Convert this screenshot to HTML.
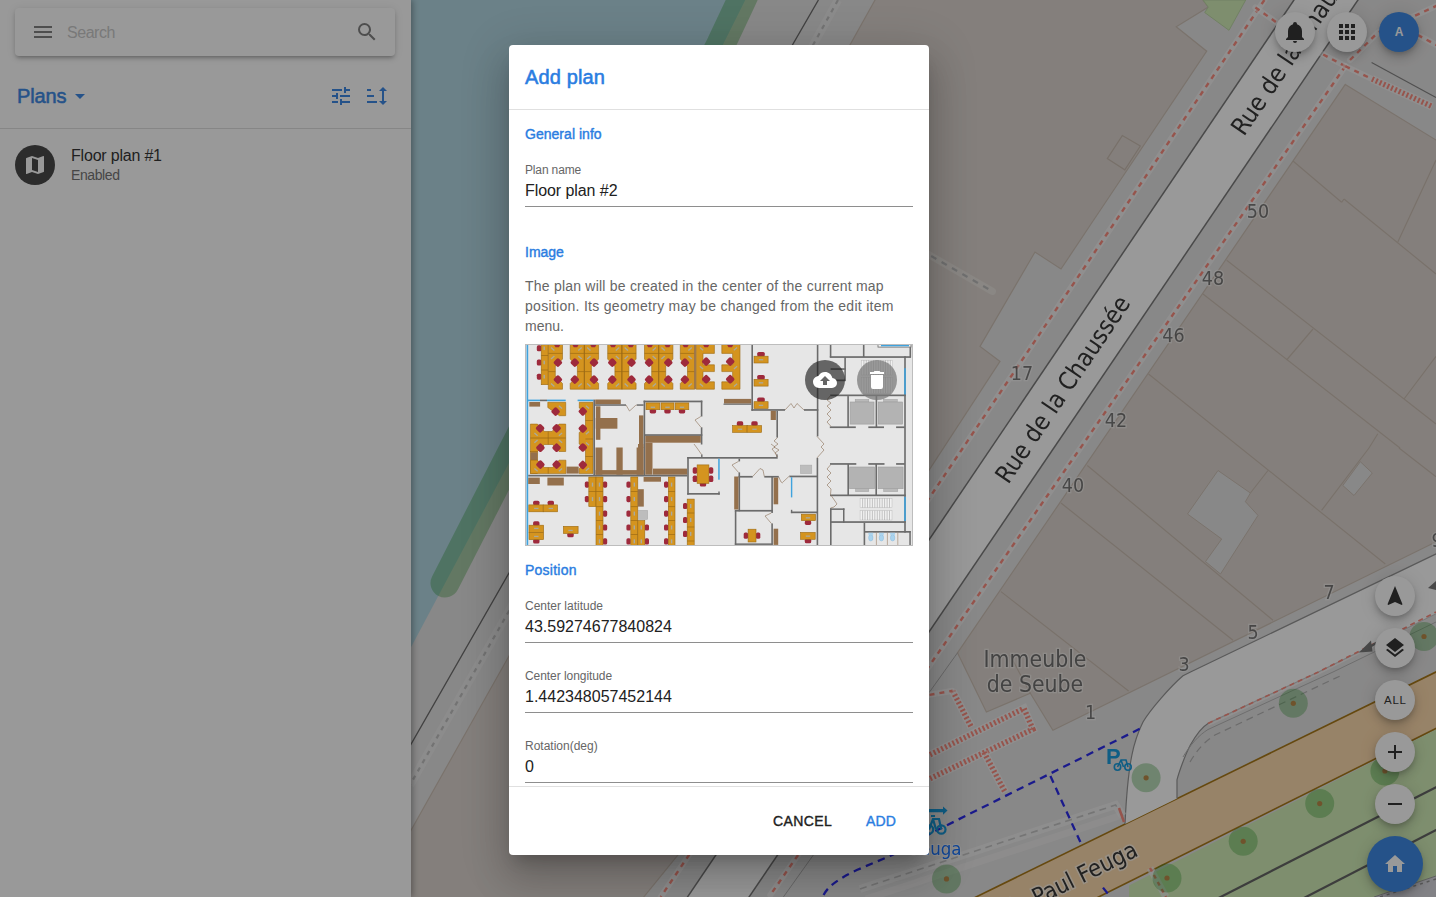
<!DOCTYPE html>
<html lang="en">
<head>
<meta charset="utf-8">
<title>Add plan</title>
<style>
html,body{margin:0;padding:0;}
body{width:1436px;height:897px;overflow:hidden;position:relative;font-family:"Liberation Sans",sans-serif;background:#f2efe9;color:#212121;}
.t{position:absolute;white-space:nowrap;line-height:1;}
#mapwrap{position:absolute;left:0;top:0;width:1436px;height:897px;overflow:hidden;}
#map{position:absolute;left:-12px;top:-12px;width:1460px;height:921px;filter:blur(.68px);}
#side{position:absolute;left:0;top:0;width:411px;height:897px;background:#fff;box-shadow:2px 0 6px rgba(0,0,0,.35);}
#search{position:absolute;left:15px;top:8px;width:380px;height:48px;border-radius:4px;background:#fff;box-shadow:0 3px 3px -2px rgba(0,0,0,.2),0 3px 4px 0 rgba(0,0,0,.14),0 1px 8px 0 rgba(0,0,0,.12);}
.fab{position:absolute;width:40px;height:40px;border-radius:50%;background:#fff;box-shadow:0 3px 5px -1px rgba(0,0,0,.2),0 6px 10px 0 rgba(0,0,0,.14),0 1px 18px 0 rgba(0,0,0,.12);}
.fab svg{position:absolute;left:8px;top:8px;width:24px;height:24px;}
#overlay{position:absolute;left:0;top:0;width:1436px;height:897px;background:rgba(33,33,33,.46);}
#dlg{position:absolute;left:509px;top:45px;width:420px;height:810px;background:#fff;border-radius:4px;box-shadow:0 11px 15px -7px rgba(0,0,0,.2),0 24px 38px 3px rgba(0,0,0,.14),0 9px 46px 8px rgba(0,0,0,.12);overflow:hidden;}
.hr{position:absolute;left:0;width:420px;height:1px;background:#e0e0e0;}
.ul{position:absolute;left:16px;width:388px;height:1px;background:#8e8e8e;}
.sec{color:#2a7de1;font-size:14px;left:16px;-webkit-text-stroke:.4px #2a7de1;}
.med{-webkit-text-stroke:.5px currentColor;}
#dlg .t{margin-top:-.1px;}

#dlg .val{margin-top:1.1px;}
.lab{color:#666;font-size:12px;left:16px;}
.val{color:#212121;font-size:16px;left:16px;}
</style>
</head>
<body>
<!--MAP-->
<div id="mapwrap"><svg id="map" viewBox="-12 -12 1460 921">
<g>
<rect x="-12" y="-12" width="1460" height="921" fill="#e0dfdf"/>
<polygon points="400,-12 751.300,-12 745.3,0 723.3,44 509,463 400,668" fill="#aad3df"/>
<polygon points="886.2,-20 1188,-20 1208.3,7.1 1176.2,26.8 1206.7,51.2 1091,224 1061,269 1035,252 980,346.4 1000,361.4 678,855 625,920 390,920 390,867.600 509,656" fill="#d9d0c9" stroke="#c6b9ad" stroke-width="1.2"/>
<polygon points="1122.3,135.6 1140.3,146 1124.8,169.8 1107.3,158.6" fill="none" stroke="#c2b4a8" stroke-width="1.2"/>
<polygon points="1203,0 1208.3,7.1 1204.7,12.5 1229,30.3 1245.7,0" fill="#cdebb0" stroke="#b5d29c" stroke-width="1"/>
<polygon points="1345.3,84.4 1460,154.700 1460,530 1052.9,730.2 1030.3,693.3 986.4,712 957.5,652.8" fill="#d9d0c9" stroke="#c6b9ad" stroke-width="1.2"/>
<line x1="1293" y1="161" x2="1341.6" y2="202.3" stroke="#c4b6aa" stroke-width="1.2"/>
<line x1="1341.6" y1="202.3" x2="1344" y2="199" stroke="#c4b6aa" stroke-width="1.2"/>
<line x1="1344" y1="199" x2="1436" y2="274" stroke="#c4b6aa" stroke-width="1.2"/>
<line x1="1436" y1="160" x2="1397.8" y2="242" stroke="#c4b6aa" stroke-width="1.2"/>
<line x1="1226.7" y1="260.2" x2="1436" y2="424" stroke="#c4b6aa" stroke-width="1.2"/>
<line x1="1203" y1="294" x2="1400" y2="448" stroke="#c4b6aa" stroke-width="1.2"/>
<line x1="1313" y1="329" x2="1286.6" y2="360" stroke="#c4b6aa" stroke-width="1.2"/>
<line x1="1404" y1="399" x2="1436" y2="356.4" stroke="#c4b6aa" stroke-width="1.2"/>
<line x1="1377.8" y1="433.8" x2="1369" y2="448" stroke="#c4b6aa" stroke-width="1.2"/>
<line x1="1148.5" y1="374" x2="1385.3" y2="564" stroke="#c4b6aa" stroke-width="1.2"/>
<line x1="1268" y1="470.5" x2="1250.4" y2="493" stroke="#c4b6aa" stroke-width="1.2"/>
<line x1="1369" y1="448" x2="1321.6" y2="510.4" stroke="#c4b6aa" stroke-width="1.2"/>
<line x1="1399" y1="448" x2="1436" y2="476.7" stroke="#c4b6aa" stroke-width="1.2"/>
<line x1="1087.3" y1="465.5" x2="1273" y2="620.3" stroke="#c4b6aa" stroke-width="1.2"/>
<line x1="1061" y1="503" x2="1233" y2="640.3" stroke="#c4b6aa" stroke-width="1.2"/>
<line x1="1001" y1="591.6" x2="1128.6" y2="691" stroke="#c4b6aa" stroke-width="1.2"/>
<line x1="1030.3" y1="693.3" x2="1010" y2="655" stroke="#c4b6aa" stroke-width="1.2"/>
<polygon points="1218,470.5 1250.4,493 1245.4,501.7 1258,515.4 1220.5,574 1205.5,561.6 1221.7,539 1187.5,514" fill="#e0dfdf" stroke="#c6b9ad" stroke-width="1"/>
<polygon points="1360.3,461.7 1372.3,473 1354,495.5 1342.8,485.5" fill="#e0dfdf" stroke="#c6b9ad" stroke-width="1"/>
<line x1="957.5" y1="652.8" x2="783.4" y2="897" stroke="#a8a8a8" stroke-width="1"/>
<polyline points="818.4,0 793,44 509,573 410,746" fill="none" stroke="#5e5e5e" stroke-width="1.4"/>
<polyline points="838,0 813.6,44 509,611 410,785" fill="none" stroke="#f0f0f0" stroke-width="8.5" opacity=".5"/>
<polyline points="838,0 813.6,44 509,611 410,785" fill="none" stroke="#b9b9b9" stroke-width="2.2" stroke-dasharray="4.5,5"/>
<path d="M445,583 L721,44 L741.7,0 L760,-40" fill="none" stroke="#008000" stroke-opacity=".3" stroke-width="29" stroke-linecap="round" stroke-linejoin="round"/>
<line x1="900" y1="238" x2="992.4" y2="291.4" stroke="#e8e4df" stroke-width="7" stroke-linecap="round" opacity=".7"/>
<line x1="900" y1="238" x2="992.4" y2="291.4" stroke="#b4b4b4" stroke-width="2.2" stroke-dasharray="6,6"/>
<polygon points="1448,666.100 951.500,909 1074.500,909 1448,722.500" fill="#fcd6a4"/>
<line x1="1448" y1="666.100" x2="951.500" y2="909" stroke="#a06b00" stroke-width="1.6"/>
<line x1="1448" y1="722.500" x2="1074.500" y2="909" stroke="#a06b00" stroke-width="1.6"/>
<polygon points="1129,909 1129,885.500 1448,723.500 1448,872.500 1338,909" fill="#cdebb0"/>
<polygon points="1338,909 1448,872 1448,909" fill="#d4d4dc"/>
<line x1="1374" y1="897" x2="1436" y2="876" stroke="#999" stroke-width="1"/>
<line x1="1380" y1="897" x2="1436" y2="879" stroke="#888" stroke-width="1.5" stroke-dasharray="3,4"/>
<line x1="1197" y1="909" x2="1448" y2="781.200" stroke="#555" stroke-width="2.2"/>
<line x1="1282.600" y1="909" x2="1448" y2="823.800" stroke="#555" stroke-width="2.2"/>
<line x1="1150" y1="868" x2="1166" y2="897" stroke="#eee" stroke-width="7" opacity=".7"/>
<line x1="1150" y1="868" x2="1166" y2="897" stroke="#fa8072" stroke-width="2.5" stroke-dasharray="4,4"/>
<path d="M1448,548.200 L1190.5,672 L1183,675.8 C1170,687 1150,710 1143,722 C1134,740 1128,760 1125,824 L1177,798.500 L1177,779.800 C1179,772 1185,755 1190.5,744.700 C1196,735 1202,727 1208,723.400 L1318.4,672 L1448,608 Z" fill="#fff"/>
<path d="M1448,548.200 L1190.5,672 L1183,675.8 C1170,687 1150,710 1143,722 C1134,740 1128,760 1125,824" fill="none" stroke="#8a8a8a" stroke-width="1.2"/>
<path d="M1177,798.5 L1177,779.8 C1179,772 1185,755 1190.5,744.7 C1196,735 1202,727 1208,723.4 L1318.4,672 L1448,608" fill="none" stroke="#8a8a8a" stroke-width="1.2"/>
<path d="M1183,757 C1190,745 1199,735 1208,729.500 L1333,672 L1436,622" fill="none" stroke="#b0b0b0" stroke-width="1"/>
<path d="M1190,762 C1197,750 1205,741 1215,735 L1340,676" fill="none" stroke="#aaa" stroke-width="1.2" stroke-dasharray="7,5"/>
<path d="M1208,723.4 L1318.4,672 L1436,612" fill="none" stroke="#fff" stroke-width="5" opacity=".5"/>
<path d="M1208,723.4 L1318.4,672 L1436,612" fill="none" stroke="#fa8072" stroke-width="1.7" stroke-dasharray="5,4"/>
<path d="M1378,642 L1366,649" stroke="#6c6c6c" stroke-width="2.5"/><polygon points="1359,652.5 1371,640.5 1372.5,651.5" fill="#6c6c6c"/>
<polygon points="1428,588 1436,581 1436,590" fill="#6c6c6c"/>
<polygon points="1302.100,-12 1366.100,-12 740.900,909 679.400,909" fill="#fff"/>
<line x1="1302.100" y1="-12" x2="679.400" y2="909" stroke="#6c6c6c" stroke-width="1.5"/>
<line x1="1366.100" y1="-12" x2="740.900" y2="909" stroke="#6c6c6c" stroke-width="1.5"/>
<path d="M1264.4,0 L660.7,897" fill="none" stroke="#fff" stroke-width="6" opacity=".45" stroke-linecap="round"/>
<path d="M1264.4,0 L660.7,897" fill="none" stroke="#fa8072" stroke-width="2.4" stroke-dasharray="5,5"/>
<path d="M1255.4,7.5 L1276.7,22.5" fill="none" stroke="#fff" stroke-width="6" opacity=".45" stroke-linecap="round"/>
<path d="M1255.4,7.5 L1276.7,22.5" fill="none" stroke="#fa8072" stroke-width="2.4" stroke-dasharray="5,5"/>
<path d="M1345.3,66.2 L770.3,895" fill="none" stroke="#fff" stroke-width="6" opacity=".45" stroke-linecap="round"/>
<path d="M1345.3,66.2 L770.3,895" fill="none" stroke="#fa8072" stroke-width="2.4" stroke-dasharray="5,5"/>
<path d="M1345.3,66.2 L1321.6,53.7" fill="none" stroke="#fff" stroke-width="6" opacity=".45" stroke-linecap="round"/>
<path d="M1345.3,66.2 L1321.6,53.7" fill="none" stroke="#fa8072" stroke-width="2.4" stroke-dasharray="5,5"/>
<path d="M1350,60 L1378,32.5 L1433,7.5 L1440,4" fill="none" stroke="#fff" stroke-width="6" opacity=".45" stroke-linecap="round"/>
<path d="M1350,60 L1378,32.5 L1433,7.5 L1440,4" fill="none" stroke="#fa8072" stroke-width="2.4" stroke-dasharray="5,5"/>
<path d="M1417.8,35 L1440,47" fill="none" stroke="#fff" stroke-width="6" opacity=".45" stroke-linecap="round"/>
<path d="M1417.8,35 L1440,47" fill="none" stroke="#fa8072" stroke-width="2.4" stroke-dasharray="5,5"/>
<path d="M1345.3,66.2 L1372,79" fill="none" stroke="#fff" stroke-width="6" opacity=".45" stroke-linecap="round"/>
<path d="M1345.3,66.2 L1372,79" fill="none" stroke="#fa8072" stroke-width="2.4" stroke-dasharray="5,5"/>
<path d="M1372,79 L1432,106.5" fill="none" stroke="#fff" stroke-width="8" opacity=".4"/>
<path d="M1372,79 L1432,106.5" fill="none" stroke="#fa8072" stroke-width="5.5" stroke-dasharray="2,2.2"/>
<line x1="1371.6" y1="62.4" x2="1436" y2="97.4" stroke="#777" stroke-width="1.1"/>
<path d="M930,754.7 L1024,708.4 L1032.8,729.2 L930,778.6" fill="none" stroke="#fff" stroke-width="8" opacity=".4"/>
<path d="M930,754.7 L1024,708.4 L1032.8,729.2 L930,778.6" fill="none" stroke="#fa8072" stroke-width="5.5" stroke-dasharray="2,2.2"/>
<path d="M952.6,690.8 L971.4,727.2" fill="none" stroke="#fff" stroke-width="8" opacity=".4"/>
<path d="M952.6,690.8 L971.4,727.2" fill="none" stroke="#fa8072" stroke-width="5.5" stroke-dasharray="2,2.2"/>
<path d="M984,752.2 L1005.2,792.4" fill="none" stroke="#fff" stroke-width="8" opacity=".4"/>
<path d="M984,752.2 L1005.2,792.4" fill="none" stroke="#fa8072" stroke-width="5.5" stroke-dasharray="2,2.2"/>
<path d="M900,700 L952.6,690.8" fill="none" stroke="#fff" stroke-width="6" opacity=".45" stroke-linecap="round"/>
<path d="M900,700 L952.6,690.8" fill="none" stroke="#fa8072" stroke-width="2.4" stroke-dasharray="5,5"/>
<path d="M860,889 L930,866 L1115.6,805 L1123,816" fill="none" stroke="#f4f4f4" stroke-width="8" opacity=".55"/>
<path d="M860,889 L930,866 L1115.6,805 L1123,816" fill="none" stroke="#bcbcbc" stroke-width="1.6" stroke-dasharray="7,5"/>
<path d="M866,899 L930,878 L1119,816" fill="none" stroke="#f4f4f4" stroke-width="7" opacity=".45"/>
<path d="M1119,808 L1124,822" fill="none" stroke="#fa8072" stroke-width="2.5"/>
<path d="M823.6,895 C828,886 840,878 856.800,870 L892.3,855 L930,833.7 L1140.6,728.4" stroke="#1616e8" stroke-width="2.3" stroke-dasharray="7.5,5.5" fill="none"/>
<path d="M1050.4,776 L1081.7,845" stroke="#1616e8" stroke-width="2.3" stroke-dasharray="7.5,5.5" fill="none"/>
<path d="M1103,887.6 L1110.5,897" stroke="#1616e8" stroke-width="2.3" stroke-dasharray="7.5,5.5" fill="none"/>
<circle cx="1146.1" cy="777.8" r="14.5" fill="#008000" fill-opacity=".3"/><circle cx="1146.1" cy="777.8" r="2.6" fill="#b27f36"/>
<circle cx="946.5" cy="878.9" r="14.5" fill="#008000" fill-opacity=".3"/><circle cx="946.5" cy="878.9" r="2.6" fill="#b27f36"/>
<circle cx="1167" cy="878" r="14.5" fill="#008000" fill-opacity=".3"/><circle cx="1167" cy="878" r="2.6" fill="#b27f36"/>
<circle cx="1293.3" cy="703.3" r="14.5" fill="#008000" fill-opacity=".3"/><circle cx="1293.3" cy="703.3" r="2.6" fill="#b27f36"/>
<circle cx="1319.7" cy="803.6" r="14.5" fill="#008000" fill-opacity=".3"/><circle cx="1319.7" cy="803.6" r="2.6" fill="#b27f36"/>
<circle cx="1243.2" cy="841.3" r="14.5" fill="#008000" fill-opacity=".3"/><circle cx="1243.2" cy="841.3" r="2.6" fill="#b27f36"/>
<circle cx="1384.9" cy="771" r="14.5" fill="#008000" fill-opacity=".3"/><circle cx="1384.9" cy="771" r="2.6" fill="#b27f36"/>
<circle cx="1424" cy="636.5" r="14.5" fill="#008000" fill-opacity=".3"/><circle cx="1424" cy="636.5" r="2.6" fill="#b27f36"/>
<text x="1258" y="218.02" font-family='"DejaVu Sans Condensed","DejaVu Sans",sans-serif' font-size="19.5" text-anchor="middle" fill="#555" stroke="#fff" stroke-opacity=".55" stroke-width="2.5" paint-order="stroke" opacity=".85">50</text>
<text x="1213" y="284.72" font-family='"DejaVu Sans Condensed","DejaVu Sans",sans-serif' font-size="19.5" text-anchor="middle" fill="#555" stroke="#fff" stroke-opacity=".55" stroke-width="2.5" paint-order="stroke" opacity=".85">48</text>
<text x="1173.5" y="342.02" font-family='"DejaVu Sans Condensed","DejaVu Sans",sans-serif' font-size="19.5" text-anchor="middle" fill="#555" stroke="#fff" stroke-opacity=".55" stroke-width="2.5" paint-order="stroke" opacity=".85">46</text>
<text x="1116" y="426.62" font-family='"DejaVu Sans Condensed","DejaVu Sans",sans-serif' font-size="19.5" text-anchor="middle" fill="#555" stroke="#fff" stroke-opacity=".55" stroke-width="2.5" paint-order="stroke" opacity=".85">42</text>
<text x="1072.9" y="492.02" font-family='"DejaVu Sans Condensed","DejaVu Sans",sans-serif' font-size="19.5" text-anchor="middle" fill="#555" stroke="#fff" stroke-opacity=".55" stroke-width="2.5" paint-order="stroke" opacity=".85">40</text>
<text x="1022" y="380.42" font-family='"DejaVu Sans Condensed","DejaVu Sans",sans-serif' font-size="19.5" text-anchor="middle" fill="#555" stroke="#fff" stroke-opacity=".55" stroke-width="2.5" paint-order="stroke" opacity=".85">17</text>
<text x="1329" y="599.42" font-family='"DejaVu Sans Condensed","DejaVu Sans",sans-serif' font-size="19.5" text-anchor="middle" fill="#555" stroke="#fff" stroke-opacity=".55" stroke-width="2.5" paint-order="stroke" opacity=".85">7</text>
<text x="1253" y="639.32" font-family='"DejaVu Sans Condensed","DejaVu Sans",sans-serif' font-size="19.5" text-anchor="middle" fill="#555" stroke="#fff" stroke-opacity=".55" stroke-width="2.5" paint-order="stroke" opacity=".85">5</text>
<text x="1184" y="671.02" font-family='"DejaVu Sans Condensed","DejaVu Sans",sans-serif' font-size="19.5" text-anchor="middle" fill="#555" stroke="#fff" stroke-opacity=".55" stroke-width="2.5" paint-order="stroke" opacity=".85">3</text>
<text x="1090.5" y="718.62" font-family='"DejaVu Sans Condensed","DejaVu Sans",sans-serif' font-size="19.5" text-anchor="middle" fill="#555" stroke="#fff" stroke-opacity=".55" stroke-width="2.5" paint-order="stroke" opacity=".85">1</text>
<text x="1437" y="547.42" font-family='"DejaVu Sans Condensed","DejaVu Sans",sans-serif' font-size="19.5" text-anchor="middle" fill="#555" stroke="#fff" stroke-opacity=".55" stroke-width="2.5" paint-order="stroke" opacity=".85">9</text>
<text x="1035" y="666.5" font-family='"DejaVu Sans Condensed","DejaVu Sans",sans-serif' font-size="22.8" text-anchor="middle" fill="#555" stroke="#fff" stroke-opacity=".5" stroke-width="2.5" paint-order="stroke" opacity=".9">Immeuble</text>
<text x="1035" y="691.8" font-family='"DejaVu Sans Condensed","DejaVu Sans",sans-serif' font-size="22.8" text-anchor="middle" fill="#555" stroke="#fff" stroke-opacity=".5" stroke-width="2.5" paint-order="stroke" opacity=".9">de Seube</text>
<text transform="translate(1000.8,480) rotate(-55.9)" x="0" y="8.928" font-family='"DejaVu Sans Condensed","DejaVu Sans",sans-serif' font-size="24.8" text-anchor="start" fill="#222" stroke="#fff" stroke-opacity=".6" stroke-width="3" paint-order="stroke">Rue de la Chaussée</text>
<text transform="translate(1236.57,132) rotate(-55.9)" x="0" y="8.928" font-family='"DejaVu Sans Condensed","DejaVu Sans",sans-serif' font-size="24.8" text-anchor="start" fill="#222" stroke="#fff" stroke-opacity=".6" stroke-width="3" paint-order="stroke">Rue de la Chaussée</text>
<text transform="translate(1058,886) rotate(-26.3)" x="0" y="8.46" font-family='"DejaVu Sans Condensed","DejaVu Sans",sans-serif' font-size="23.5" text-anchor="middle" fill="#222" stroke="#fff" stroke-opacity=".6" stroke-width="3" paint-order="stroke">Allée Paul Feuga</text>
<text x="961.5" y="855" font-family='"DejaVu Sans Condensed","DejaVu Sans",sans-serif' font-size="18.500" text-anchor="end" fill="#0066ff" stroke="#fff" stroke-opacity=".5" stroke-width="2" paint-order="stroke">Feuga</text>
<text x="1106" y="764" font-family='"Liberation Sans",sans-serif' font-weight="bold" font-size="22" fill="#0092da">P</text>
<g stroke="#0092da" stroke-width="1.6" fill="none"><circle cx="1117.5" cy="767" r="3.2"/><circle cx="1128" cy="767" r="3.2"/><path d="M1117.5,767 L1121,760 L1126,760 L1128,767 M1121,760 L1123.5,767"/></g>
<g stroke="#0092da" stroke-width="2.2" fill="none"><circle cx="929" cy="829.500" r="4.2"/><circle cx="941.300" cy="829.500" r="4.2"/><path d="M929,829.500 L933,819 L939,819 L941.300,829.500 M933,819 L936,829.500 M931,816 L935,816"/></g>
<path d="M922,809 L943,809 L943,806.500 L947.500,810.600 L943,814.700 L943,812.200 L922,812.200 Z" fill="#0092da"/>
</g>
</svg></div>
<!--/MAP-->

<!--SIDE-->
<div id="side">
  <div id="search">
    <svg style="position:absolute;left:16px;top:12px" width="24" height="24" viewBox="0 0 24 24"><path fill="#757575" d="M3 6h18v2H3zM3 11h18v2H3zM3 16h18v2H3z"/></svg>
    <div class="t" id="s_search" style="left:52px;top:16.9px;font-size:16px;color:#c4c4c4;letter-spacing:-0.45px;">Search</div>
    <svg style="position:absolute;left:339.5px;top:12px" width="24" height="24" viewBox="0 0 24 24"><path fill="#757575" d="M9.5,3A6.5,6.5 0 0,1 16,9.500C16,11.110 15.410,12.590 14.440,13.730L14.710,14H15.500L20.500,19L19,20.500L14,15.500V14.710L13.730,14.440C12.590,15.410 11.110,16 9.500,16A6.500,6.500 0 0,1 3,9.500A6.500,6.500 0 0,1 9.500,3M9.500,5C7,5 5,7 5,9.500C5,12 7,14 9.500,14C12,14 14,12 14,9.500C14,7 12,5 9.500,5Z"/></svg>
  </div>
  <div class="t" id="s_plans" style="left:17px;top:85.800px;font-size:20px;color:#2a7de1;-webkit-text-stroke:.55px #2a7de1;letter-spacing:-0.12px;">Plans</div>
  <svg style="position:absolute;left:68px;top:84px" width="24" height="24" viewBox="0 0 24 24"><path fill="#2a7de1" d="M7,10L12,15L17,10H7Z"/></svg>
  <svg style="position:absolute;left:329px;top:84px" width="24" height="24" viewBox="0 0 24 24"><path fill="#2a7de1" d="M3 17v2h6v-2H3zM3 5v2h10V5H3zm10 16v-2h8v-2h-8v-2h-2v6h2zM7 9v2H3v2h4v2h2V9H7zm14 4v-2H11v2h10zm-6-4h2V7h4V5h-4V3h-2v6z"/></svg>
  <svg style="position:absolute;left:365px;top:84px" width="24" height="24" viewBox="0 0 24 24"><path fill="#2a7de1" d="M18 21L14 17H17V7H14L18 3L22 7H19V17H22M2 19V17H12V19M2 13V11H9V13M2 7V5H6V7H2Z"/></svg>
  <div style="position:absolute;left:0;top:128px;width:411px;height:1px;background:#dcdcdc"></div>
  <div style="position:absolute;left:15px;top:145px;width:40px;height:40px;border-radius:50%;background:#363636">
    <svg style="position:absolute;left:8px;top:8px" width="24" height="24" viewBox="0 0 24 24"><path fill="#fff" d="M15,19L9,16.890V5L15,7.110M20.500,3C20.440,3 20.390,3 20.340,3L15,5.100L9,3L3.360,4.900C3.150,4.970 3,5.150 3,5.380V20.500A0.500,0.500 0 0,0 3.500,21C3.550,21 3.610,21 3.660,20.970L9,18.900L15,21L20.640,19.100C20.850,19 21,18.850 21,18.620V3.500A0.500,0.500 0 0,0 20.500,3Z"/></svg>
  </div>
  <div class="t" id="s_fp1" style="left:71px;top:148.3px;font-size:16px;color:#212121;letter-spacing:-0.2px;">Floor plan #1</div>
  <div class="t" id="s_en" style="left:71px;top:167.800px;font-size:14px;color:#666;letter-spacing:-0.4px;">Enabled</div>
</div>
<!--/SIDE-->

<!--FABS-->
<div class="fab" style="left:1275px;top:12px"><svg viewBox="0 0 24 24"><path fill="#212121" d="M21,19V20H3V19L5,17V11C5,7.900 7.030,5.170 10,4.290C10,4.190 10,4.100 10,4A2,2 0 0,1 12,2A2,2 0 0,1 14,4C14,4.100 14,4.190 14,4.290C16.970,5.170 19,7.900 19,11V17L21,19M14,21A2,2 0 0,1 12,23A2,2 0 0,1 10,21"/></svg></div>
<div class="fab" style="left:1327px;top:12px"><svg viewBox="0 0 24 24"><path fill="#212121" d="M4 8h4V4H4v4zm6 12h4v-4h-4v4zm-6 0h4v-4H4v4zm0-6h4v-4H4v4zm6 0h4v-4h-4v4zm6-10v4h4V4h-4zm-6 4h4V4h-4v4zm6 6h4v-4h-4v4zm0 6h4v-4h-4v4z"/></svg></div>
<div class="fab" style="left:1379px;top:12px;background:#2a7de1"><div class="t" style="left:0;width:40px;text-align:center;top:14px;font-size:12px;font-weight:bold;color:#fff">A</div></div>
<div class="fab" style="left:1375px;top:576px"><svg viewBox="0 0 24 24"><path fill="#212121" d="M12,2L4.500,20.290L5.210,21L12,18L18.790,21L19.500,20.290L12,2Z"/></svg></div>
<div class="fab" style="left:1375px;top:628px"><svg viewBox="0 0 24 24"><path fill="#212121" d="M12,16L19.360,10.270L21,9L12,2L3,9L4.630,10.270M12,18.540L4.620,12.810L3,14.070L12,21.070L21,14.070L19.370,12.800L12,18.540Z"/></svg></div>
<div class="fab" style="left:1375px;top:680px"><div class="t" style="left:0;width:40px;text-align:center;top:14.500px;font-size:11.500px;color:#212121;letter-spacing:0.7px;text-indent:0.7px">ALL</div></div>
<div class="fab" style="left:1375px;top:732px"><svg viewBox="0 0 24 24"><path fill="#212121" d="M19,13H13V19H11V13H5V11H11V5H13V11H19V13Z"/></svg></div>
<div class="fab" style="left:1375px;top:784px"><svg viewBox="0 0 24 24"><path fill="#212121" d="M19,13H5V11H19V13Z"/></svg></div>
<div class="fab" style="left:1367px;top:836px;width:56px;height:56px;background:#2a7de1"><svg viewBox="0 0 24 24" style="left:16px;top:16px"><path fill="#fff" d="M10,20V14H14V20H19V12H22L12,3L2,12H5V20H10Z"/></svg></div>
<!--/FABS-->

<div id="overlay"></div>

<!--DLG-->
<div id="dlg">
  <div class="t" id="d_title" style="left:16px;top:22px;font-size:20px;color:#2a7de1;-webkit-text-stroke:.55px #2a7de1;letter-spacing:0.13px;">Add plan</div>
  <div class="hr" style="top:64px"></div>
  <div class="t sec" id="d_gi" style="top:82px;letter-spacing:0.03px;">General info</div>
  <div class="t lab" id="d_pn" style="top:119px;letter-spacing:-0.15px;">Plan name</div>
  <div class="t val" id="d_fp2" style="top:137px;letter-spacing:-0.07px;">Floor plan #2</div>
  <div class="ul" style="top:161px"></div>
  <div class="t sec" id="d_im" style="top:200px;letter-spacing:0px;">Image</div>
  <div class="t" id="d_p1" style="left:16px;top:234px;font-size:14px;color:#666;letter-spacing:0.22px;">The plan will be created in the center of the current map</div>
  <div class="t" id="d_p2" style="left:16px;top:254px;font-size:14px;color:#666;letter-spacing:0.29px;">position. Its geometry may be changed from the edit item</div>
  <div class="t" id="d_p3" style="left:16px;top:274px;font-size:14px;color:#666;">menu.</div>
  <!--PLAN-->
  <svg id="plan" viewBox="0 0 388 202" style="position:absolute;left:16px;top:299px;width:388px;height:202px;">
<rect x="0.0" y="0.0" width="388.0" height="202.0" fill="#e6e6e6"/>
<rect x="11.8" y="1.3" width="4.8" height="6.0" rx="1.6" fill="#9e2a3c"/>
<rect x="11.8" y="15.5" width="4.8" height="6.0" rx="1.6" fill="#9e2a3c"/>
<rect x="11.8" y="29.7" width="4.8" height="6.0" rx="1.6" fill="#9e2a3c"/>
<rect x="16.2" y="0.5" width="7.0" height="40.2" fill="#d4941f" stroke="#9c6a14" stroke-width=".6"/>
<rect x="18.5" y="2.5" width="1.4" height="3.6" fill="#a9a9a0" transform="rotate(0 19.2 4.3)"/>
<rect x="18.5" y="16.7" width="1.4" height="3.6" fill="#a9a9a0" transform="rotate(0 19.2 18.5)"/>
<rect x="18.5" y="30.9" width="1.4" height="3.6" fill="#a9a9a0" transform="rotate(0 19.2 32.7)"/>
<line x1="16.2" y1="11.5" x2="23.2" y2="11.5" stroke="#9c6a14" stroke-width=".7"/>
<line x1="16.2" y1="26.0" x2="23.2" y2="26.0" stroke="#9c6a14" stroke-width=".7"/>
<polygon points="23.3,45.2 37.5,45.2 37.5,39.5 30.3,32.1 30.3,22.5 37.5,15.1 37.5,0.5 23.3,0.5" fill="#d4941f" stroke="#9c6a14" stroke-width=".6"/>
<line x1="23.3" y1="9.4" x2="37.5" y2="9.4" stroke="#9c6a14" stroke-width=".7"/>
<line x1="23.3" y1="27.6" x2="30.3" y2="27.6" stroke="#9c6a14" stroke-width=".7"/>
<rect x="29.4" y="15.1" width="7.0" height="7.0" rx="1.7" fill="#9e2a3c" transform="rotate(45 32.9 18.6)"/>
<rect x="29.4" y="32.1" width="7.0" height="7.0" rx="1.7" fill="#9e2a3c" transform="rotate(45 32.9 35.6)"/>
<polygon points="28.9,0.5 35.5,0.5 33.9,3.2 30.5,3.2" fill="#9e2a3c"/>
<rect x="25.5" y="4.3" width="4.4" height="1.4" fill="#a9a9a0" transform="rotate(40 27.7 5.0)"/>
<rect x="25.5" y="12.8" width="4.4" height="1.4" fill="#a9a9a0" transform="rotate(-40 27.7 13.5)"/>
<rect x="25.5" y="40.3" width="4.4" height="1.4" fill="#a9a9a0" transform="rotate(40 27.7 41.0)"/>
<polygon points="59.4,0.5 45.2,0.5 45.2,15.1 52.4,22.5 52.4,32.1 45.2,39.5 45.2,45.2 59.4,45.2" fill="#d4941f" stroke="#9c6a14" stroke-width=".6"/>
<polygon points="59.4,45.2 73.6,45.2 73.6,39.5 66.4,32.1 66.4,22.5 73.6,15.1 73.6,0.5 59.4,0.5" fill="#d4941f" stroke="#9c6a14" stroke-width=".6"/>
<line x1="45.2" y1="9.4" x2="73.6" y2="9.4" stroke="#9c6a14" stroke-width=".7"/>
<line x1="52.4" y1="27.6" x2="66.4" y2="27.6" stroke="#9c6a14" stroke-width=".7"/>
<line x1="59.4" y1=".5" x2="59.4" y2="45.2" stroke="#9c6a14" stroke-width=".8"/>
<rect x="46.3" y="15.1" width="7.0" height="7.0" rx="1.7" fill="#9e2a3c" transform="rotate(45 49.8 18.6)"/>
<rect x="46.3" y="32.1" width="7.0" height="7.0" rx="1.7" fill="#9e2a3c" transform="rotate(45 49.8 35.6)"/>
<polygon points="47.2,0.5 53.8,0.5 52.2,3.2 48.8,3.2" fill="#9e2a3c"/>
<rect x="52.8" y="4.3" width="4.4" height="1.4" fill="#a9a9a0" transform="rotate(-40 55.0 5.0)"/>
<rect x="52.8" y="12.8" width="4.4" height="1.4" fill="#a9a9a0" transform="rotate(40 55.0 13.5)"/>
<rect x="52.8" y="40.3" width="4.4" height="1.4" fill="#a9a9a0" transform="rotate(-40 55.0 41.0)"/>
<rect x="65.5" y="15.1" width="7.0" height="7.0" rx="1.7" fill="#9e2a3c" transform="rotate(45 69.0 18.6)"/>
<rect x="65.5" y="32.1" width="7.0" height="7.0" rx="1.7" fill="#9e2a3c" transform="rotate(45 69.0 35.6)"/>
<polygon points="65.0,0.5 71.6,0.5 70.0,3.2 66.6,3.2" fill="#9e2a3c"/>
<rect x="61.6" y="4.3" width="4.4" height="1.4" fill="#a9a9a0" transform="rotate(40 63.8 5.0)"/>
<rect x="61.6" y="12.8" width="4.4" height="1.4" fill="#a9a9a0" transform="rotate(-40 63.8 13.5)"/>
<rect x="61.6" y="40.3" width="4.4" height="1.4" fill="#a9a9a0" transform="rotate(40 63.8 41.0)"/>
<polygon points="96.9,0.5 82.7,0.5 82.7,15.1 89.9,22.5 89.9,32.1 82.7,39.5 82.7,45.2 96.9,45.2" fill="#d4941f" stroke="#9c6a14" stroke-width=".6"/>
<polygon points="96.9,45.2 111.1,45.2 111.1,39.5 103.9,32.1 103.9,22.5 111.1,15.1 111.1,0.5 96.9,0.5" fill="#d4941f" stroke="#9c6a14" stroke-width=".6"/>
<line x1="82.7" y1="9.4" x2="111.1" y2="9.4" stroke="#9c6a14" stroke-width=".7"/>
<line x1="89.9" y1="27.6" x2="103.9" y2="27.6" stroke="#9c6a14" stroke-width=".7"/>
<line x1="96.9" y1=".5" x2="96.9" y2="45.2" stroke="#9c6a14" stroke-width=".8"/>
<rect x="83.8" y="15.1" width="7.0" height="7.0" rx="1.7" fill="#9e2a3c" transform="rotate(45 87.3 18.6)"/>
<rect x="83.8" y="32.1" width="7.0" height="7.0" rx="1.7" fill="#9e2a3c" transform="rotate(45 87.3 35.6)"/>
<polygon points="84.7,0.5 91.3,0.5 89.7,3.2 86.3,3.2" fill="#9e2a3c"/>
<rect x="90.3" y="4.3" width="4.4" height="1.4" fill="#a9a9a0" transform="rotate(-40 92.5 5.0)"/>
<rect x="90.3" y="12.8" width="4.4" height="1.4" fill="#a9a9a0" transform="rotate(40 92.5 13.5)"/>
<rect x="90.3" y="40.3" width="4.4" height="1.4" fill="#a9a9a0" transform="rotate(-40 92.5 41.0)"/>
<rect x="103.0" y="15.1" width="7.0" height="7.0" rx="1.7" fill="#9e2a3c" transform="rotate(45 106.5 18.6)"/>
<rect x="103.0" y="32.1" width="7.0" height="7.0" rx="1.7" fill="#9e2a3c" transform="rotate(45 106.5 35.6)"/>
<polygon points="102.5,0.5 109.1,0.5 107.5,3.2 104.1,3.2" fill="#9e2a3c"/>
<rect x="99.1" y="4.3" width="4.4" height="1.4" fill="#a9a9a0" transform="rotate(40 101.3 5.0)"/>
<rect x="99.1" y="12.8" width="4.4" height="1.4" fill="#a9a9a0" transform="rotate(-40 101.3 13.5)"/>
<rect x="99.1" y="40.3" width="4.4" height="1.4" fill="#a9a9a0" transform="rotate(40 101.3 41.0)"/>
<polygon points="133.7,0.5 119.5,0.5 119.5,15.1 126.7,22.5 126.7,32.1 119.5,39.5 119.5,45.2 133.7,45.2" fill="#d4941f" stroke="#9c6a14" stroke-width=".6"/>
<polygon points="133.7,45.2 147.9,45.2 147.9,39.5 140.7,32.1 140.7,22.5 147.9,15.1 147.9,0.5 133.7,0.5" fill="#d4941f" stroke="#9c6a14" stroke-width=".6"/>
<line x1="119.5" y1="9.4" x2="147.9" y2="9.4" stroke="#9c6a14" stroke-width=".7"/>
<line x1="126.7" y1="27.6" x2="140.7" y2="27.6" stroke="#9c6a14" stroke-width=".7"/>
<line x1="133.7" y1=".5" x2="133.7" y2="45.2" stroke="#9c6a14" stroke-width=".8"/>
<rect x="120.6" y="15.1" width="7.0" height="7.0" rx="1.7" fill="#9e2a3c" transform="rotate(45 124.1 18.6)"/>
<rect x="120.6" y="32.1" width="7.0" height="7.0" rx="1.7" fill="#9e2a3c" transform="rotate(45 124.1 35.6)"/>
<polygon points="121.5,0.5 128.1,0.5 126.5,3.2 123.1,3.2" fill="#9e2a3c"/>
<rect x="127.1" y="4.3" width="4.4" height="1.4" fill="#a9a9a0" transform="rotate(-40 129.3 5.0)"/>
<rect x="127.1" y="12.8" width="4.4" height="1.4" fill="#a9a9a0" transform="rotate(40 129.3 13.5)"/>
<rect x="127.1" y="40.3" width="4.4" height="1.4" fill="#a9a9a0" transform="rotate(-40 129.3 41.0)"/>
<rect x="139.8" y="15.1" width="7.0" height="7.0" rx="1.7" fill="#9e2a3c" transform="rotate(45 143.3 18.6)"/>
<rect x="139.8" y="32.1" width="7.0" height="7.0" rx="1.7" fill="#9e2a3c" transform="rotate(45 143.3 35.6)"/>
<polygon points="139.3,0.5 145.9,0.5 144.3,3.2 140.9,3.2" fill="#9e2a3c"/>
<rect x="135.9" y="4.3" width="4.4" height="1.4" fill="#a9a9a0" transform="rotate(40 138.1 5.0)"/>
<rect x="135.9" y="12.8" width="4.4" height="1.4" fill="#a9a9a0" transform="rotate(-40 138.1 13.5)"/>
<rect x="135.9" y="40.3" width="4.4" height="1.4" fill="#a9a9a0" transform="rotate(40 138.1 41.0)"/>
<polygon points="169.5,0.5 155.3,0.5 155.3,15.1 162.5,22.5 162.5,32.1 155.3,39.5 155.3,45.2 169.5,45.2" fill="#d4941f" stroke="#9c6a14" stroke-width=".6"/>
<line x1="155.3" y1="9.4" x2="169.5" y2="9.4" stroke="#9c6a14" stroke-width=".7"/>
<line x1="162.5" y1="27.6" x2="169.5" y2="27.6" stroke="#9c6a14" stroke-width=".7"/>
<rect x="156.4" y="15.1" width="7.0" height="7.0" rx="1.7" fill="#9e2a3c" transform="rotate(45 159.9 18.6)"/>
<rect x="156.4" y="32.1" width="7.0" height="7.0" rx="1.7" fill="#9e2a3c" transform="rotate(45 159.9 35.6)"/>
<polygon points="157.3,0.5 163.9,0.5 162.3,3.2 158.9,3.2" fill="#9e2a3c"/>
<rect x="162.9" y="4.3" width="4.4" height="1.4" fill="#a9a9a0" transform="rotate(-40 165.1 5.0)"/>
<rect x="162.9" y="12.8" width="4.4" height="1.4" fill="#a9a9a0" transform="rotate(40 165.1 13.5)"/>
<rect x="162.9" y="40.3" width="4.4" height="1.4" fill="#a9a9a0" transform="rotate(-40 165.1 41.0)"/>
<rect x="169.3" y="0.5" width="1.6" height="44.7" fill="#94704c"/>
<polygon points="171.2,0.5 189.4,0.5 189.4,9.4 178.0,9.4 178.0,20.8 189.4,20.8 189.4,27.6 178.0,27.6 178.0,37.8 189.4,37.8 189.4,45.2 171.2,45.2" fill="#d4941f" stroke="#9c6a14" stroke-width=".6"/>
<rect x="177.7" y="14.1" width="7.0" height="7.0" rx="1.7" fill="#9e2a3c" transform="rotate(45 181.2 17.6)"/>
<rect x="177.7" y="31.7" width="7.0" height="7.0" rx="1.7" fill="#9e2a3c" transform="rotate(45 181.2 35.2)"/>
<polygon points="177.9,0.5 184.5,0.5 182.9,3.2 179.5,3.2" fill="#9e2a3c"/>
<polygon points="215.0,0.5 196.8,0.5 196.8,9.4 207.6,9.4 207.6,20.8 196.8,20.8 196.8,27.6 207.6,27.6 207.6,37.8 196.8,37.8 196.8,45.2 215.0,45.2" fill="#d4941f" stroke="#9c6a14" stroke-width=".6"/>
<rect x="201.7" y="14.1" width="7.0" height="7.0" rx="1.7" fill="#9e2a3c" transform="rotate(45 205.2 17.6)"/>
<rect x="201.7" y="31.7" width="7.0" height="7.0" rx="1.7" fill="#9e2a3c" transform="rotate(45 205.2 35.2)"/>
<polygon points="201.9,0.5 208.5,0.5 206.9,3.2 203.5,3.2" fill="#9e2a3c"/>
<rect x="174.4" y="4.3" width="4.2" height="1.3" fill="#a9a9a0" transform="rotate(40 176.5 5.0)"/>
<rect x="174.4" y="22.9" width="4.2" height="1.3" fill="#a9a9a0" transform="rotate(40 176.5 23.5)"/>
<rect x="174.4" y="40.4" width="4.2" height="1.3" fill="#a9a9a0" transform="rotate(40 176.5 41.0)"/>
<rect x="208.4" y="4.3" width="4.2" height="1.3" fill="#a9a9a0" transform="rotate(-40 210.5 5.0)"/>
<rect x="208.4" y="22.9" width="4.2" height="1.3" fill="#a9a9a0" transform="rotate(-40 210.5 23.5)"/>
<rect x="208.4" y="40.4" width="4.2" height="1.3" fill="#a9a9a0" transform="rotate(-40 210.5 41.0)"/>
<rect x="1.6" y="0.0" width="1.6" height="202.0" fill="#3fa3de"/>
<rect x="3.0" y="55.6" width="12.0" height="1.6" fill="#3fa3de"/>
<rect x="15.0" y="55.6" width="7.0" height="1.6" fill="#6b6b6b"/>
<rect x="22.0" y="55.6" width="18.7" height="1.6" fill="#3fa3de"/>
<rect x="52.6" y="55.6" width="15.9" height="1.6" fill="#3fa3de"/>
<rect x="4.3" y="58.0" width="10.8" height="4.6" fill="#94704c"/>
<polygon points="22.8,58.3 40.7,58.3 40.7,71.7 34.5,71.7 22.8,63.5" fill="#d4941f" stroke="#9c6a14" stroke-width=".6"/>
<rect x="33.4" y="62.4" width="4.2" height="1.3" fill="#a9a9a0" transform="rotate(40 35.5 63.0)"/>
<rect x="27.1" y="64.1" width="7.0" height="7.0" rx="1.7" fill="#9e2a3c" transform="rotate(45 30.6 67.6)"/>
<polygon points="54.3,58.3 68.0,58.3 68.0,129.6 54.2,129.6 54.2,124.5 60.5,119.0 60.5,106.0 54.2,100.0 54.2,88.5 60.5,83.0 60.5,70.0 54.3,64.0" fill="#d4941f" stroke="#9c6a14" stroke-width=".6"/>
<rect x="60.4" y="62.4" width="4.2" height="1.3" fill="#a9a9a0" transform="rotate(40 62.5 63.0)"/>
<rect x="60.4" y="88.3" width="4.2" height="1.3" fill="#a9a9a0" transform="rotate(-40 62.5 89.0)"/>
<rect x="60.4" y="99.3" width="4.2" height="1.3" fill="#a9a9a0" transform="rotate(40 62.5 100.0)"/>
<rect x="60.4" y="124.8" width="4.2" height="1.3" fill="#a9a9a0" transform="rotate(-40 62.5 125.5)"/>
<rect x="54.3" y="63.9" width="7.0" height="7.0" rx="1.7" fill="#9e2a3c" transform="rotate(45 57.8 67.4)"/>
<rect x="54.3" y="81.0" width="7.0" height="7.0" rx="1.7" fill="#9e2a3c" transform="rotate(45 57.8 84.5)"/>
<rect x="54.3" y="100.0" width="7.0" height="7.0" rx="1.7" fill="#9e2a3c" transform="rotate(45 57.8 103.5)"/>
<rect x="54.3" y="117.4" width="7.0" height="7.0" rx="1.7" fill="#9e2a3c" transform="rotate(45 57.8 120.9)"/>
<line x1="60.5" y1="76.5" x2="68" y2="76.5" stroke="#9c6a14" stroke-width=".7"/>
<line x1="60.5" y1="95.0" x2="68" y2="95.0" stroke="#9c6a14" stroke-width=".7"/>
<line x1="60.5" y1="112.5" x2="68" y2="112.5" stroke="#9c6a14" stroke-width=".7"/>
<polygon points="5.4,80.1 12.5,80.1 19.5,87.5 27.0,87.5 34.0,80.1 40.7,80.1 40.7,107.5 34.0,107.5 27.5,100.5 19.5,100.5 12.5,107.5 5.4,107.5" fill="#d4941f" stroke="#9c6a14" stroke-width=".6"/>
<line x1="5.4" y1="94" x2="40.700" y2="94" stroke="#9c6a14" stroke-width=".8"/><line x1="23.2" y1="87.500" x2="23.2" y2="100.500" stroke="#9c6a14" stroke-width=".7"/>
<rect x="8.9" y="89.8" width="4.2" height="1.3" fill="#a9a9a0" transform="rotate(40 11.0 90.5)"/>
<rect x="33.4" y="89.8" width="4.2" height="1.3" fill="#a9a9a0" transform="rotate(-40 35.5 90.5)"/>
<rect x="8.9" y="96.8" width="4.2" height="1.3" fill="#a9a9a0" transform="rotate(-40 11.0 97.5)"/>
<rect x="33.4" y="96.8" width="4.2" height="1.3" fill="#a9a9a0" transform="rotate(40 35.5 97.5)"/>
<rect x="5.5" y="107.5" width="7.0" height="22.1" fill="#d4941f" stroke="#9c6a14" stroke-width=".6"/>
<rect x="5.5" y="108.3" width="7.0" height="7.7" fill="#94704c"/>
<polygon points="5.5,116.2 12.5,116.2 19.5,123.5 27.5,123.5 34.0,116.2 40.9,116.2 40.9,129.6 5.5,129.6" fill="#d4941f" stroke="#9c6a14" stroke-width=".6"/>
<line x1="23.2" y1="123.500" x2="23.2" y2="129.600" stroke="#9c6a14" stroke-width=".7"/>
<rect x="8.9" y="125.3" width="4.2" height="1.3" fill="#a9a9a0" transform="rotate(40 11.0 126.0)"/>
<rect x="33.4" y="125.3" width="4.2" height="1.3" fill="#a9a9a0" transform="rotate(-40 35.5 126.0)"/>
<rect x="41.5" y="122.6" width="12.2" height="7.0" fill="#94704c"/>
<rect x="11.6" y="80.8" width="7.0" height="7.0" rx="1.7" fill="#9e2a3c" transform="rotate(45 15.1 84.3)"/>
<rect x="28.1" y="80.8" width="7.0" height="7.0" rx="1.7" fill="#9e2a3c" transform="rotate(45 31.6 84.3)"/>
<rect x="11.9" y="100.2" width="7.0" height="7.0" rx="1.7" fill="#9e2a3c" transform="rotate(45 15.4 103.7)"/>
<rect x="28.1" y="100.2" width="7.0" height="7.0" rx="1.7" fill="#9e2a3c" transform="rotate(45 31.6 103.7)"/>
<rect x="11.9" y="117.1" width="7.0" height="7.0" rx="1.7" fill="#9e2a3c" transform="rotate(45 15.4 120.6)"/>
<rect x="28.1" y="117.1" width="7.0" height="7.0" rx="1.7" fill="#9e2a3c" transform="rotate(45 31.6 120.6)"/>
<rect x="68.4" y="55.6" width="1.6" height="75.7" fill="#6b6b6b"/>
<rect x="70.2" y="55.5" width="25.6" height="4.8" fill="#94704c"/>
<rect x="69.9" y="60.3" width="31.1" height="1.5" fill="#6b6b6b"/>
<rect x="111.8" y="60.3" width="6.8" height="1.5" fill="#6b6b6b"/>
<polyline points="101.0,61.0 104.5,67.0 110.5,61.5 111.8,61.0" fill="none" stroke="#8a6f55" stroke-width=".6"/>
<rect x="70.8" y="62.3" width="4.6" height="33.5" fill="#94704c"/>
<rect x="70.8" y="74.0" width="21.6" height="10.7" fill="#94704c"/>
<rect x="114.0" y="71.4" width="4.4" height="28.6" fill="#94704c"/>
<rect x="118.6" y="56.6" width="1.6" height="74.7" fill="#6b6b6b"/>
<rect x="70.5" y="103.5" width="6.9" height="27.2" fill="#94704c"/>
<rect x="91.4" y="103.5" width="6.3" height="27.2" fill="#94704c"/>
<rect x="111.6" y="103.5" width="7.0" height="27.2" fill="#94704c"/>
<rect x="70.5" y="126.1" width="48.1" height="4.6" fill="#94704c"/>
<rect x="113.0" y="100.0" width="5.6" height="4.0" fill="#94704c"/>
<rect x="118.6" y="56.6" width="58.7" height="1.7" fill="#6b6b6b"/>
<rect x="175.8" y="56.6" width="1.6" height="15.9" fill="#6b6b6b"/>
<rect x="175.8" y="83.3" width="1.6" height="17.2" fill="#6b6b6b"/>
<polyline points="175.8,72.5 170.0,76.0 176.0,83.3" fill="none" stroke="#8a6f55" stroke-width=".6"/>
<rect x="124.7" y="65.0" width="6.4" height="4.4" rx="1.6" fill="#9e2a3c"/>
<rect x="121.0" y="58.9" width="13.8" height="6.8" fill="#d4941f" stroke="#9c6a14" stroke-width=".6"/>
<rect x="125.7" y="62.6" width="4.4" height="1.3" fill="#a9a9a0" transform="rotate(0 127.9 63.3)"/>
<rect x="139.3" y="65.0" width="6.4" height="4.4" rx="1.6" fill="#9e2a3c"/>
<rect x="136.0" y="58.9" width="13.0" height="6.8" fill="#d4941f" stroke="#9c6a14" stroke-width=".6"/>
<rect x="140.3" y="62.6" width="4.4" height="1.3" fill="#a9a9a0" transform="rotate(0 142.5 63.3)"/>
<rect x="153.8" y="65.0" width="6.4" height="4.4" rx="1.6" fill="#9e2a3c"/>
<rect x="150.2" y="58.9" width="13.6" height="6.8" fill="#d4941f" stroke="#9c6a14" stroke-width=".6"/>
<rect x="154.8" y="62.6" width="4.4" height="1.3" fill="#a9a9a0" transform="rotate(0 157.0 63.3)"/>
<rect x="119.8" y="90.2" width="57.5" height="1.7" fill="#6b6b6b"/>
<rect x="120.3" y="91.9" width="55.5" height="6.8" fill="#94704c"/>
<rect x="120.3" y="98.7" width="7.2" height="32.0" fill="#94704c"/>
<rect x="128.0" y="124.6" width="34.2" height="6.1" fill="#94704c"/>
<rect x="3.2" y="130.8" width="159.0" height="1.7" fill="#6b6b6b"/>
<rect x="3.2" y="133.6" width="11.6" height="6.4" fill="#94704c"/>
<rect x="22.4" y="133.6" width="16.4" height="7.9" fill="#94704c"/>
<rect x="8.1" y="156.7" width="6.4" height="4.6" rx="1.6" fill="#9e2a3c"/>
<rect x="22.6" y="156.7" width="6.4" height="4.6" rx="1.6" fill="#9e2a3c"/>
<rect x="3.8" y="160.9" width="14.4" height="6.9" fill="#d4941f" stroke="#9c6a14" stroke-width=".6"/>
<rect x="18.2" y="160.9" width="14.4" height="6.9" fill="#d4941f" stroke="#9c6a14" stroke-width=".6"/>
<rect x="9.1" y="163.8" width="4.4" height="1.3" fill="#a9a9a0" transform="rotate(0 11.3 164.5)"/>
<rect x="23.6" y="163.8" width="4.4" height="1.3" fill="#a9a9a0" transform="rotate(0 25.8 164.5)"/>
<rect x="8.1" y="177.3" width="6.4" height="4.6" rx="1.6" fill="#9e2a3c"/>
<rect x="8.1" y="195.0" width="6.4" height="4.6" rx="1.6" fill="#9e2a3c"/>
<rect x="4.0" y="181.2" width="14.6" height="7.2" fill="#d4941f" stroke="#9c6a14" stroke-width=".6"/>
<rect x="4.0" y="188.4" width="14.6" height="7.3" fill="#d4941f" stroke="#9c6a14" stroke-width=".6"/>
<rect x="9.1" y="183.8" width="4.4" height="1.3" fill="#a9a9a0" transform="rotate(0 11.3 184.5)"/>
<rect x="9.1" y="191.8" width="4.4" height="1.3" fill="#a9a9a0" transform="rotate(0 11.3 192.5)"/>
<rect x="42.3" y="188.7" width="6.4" height="4.6" rx="1.6" fill="#9e2a3c"/>
<rect x="38.4" y="182.3" width="14.7" height="7.2" fill="#d4941f" stroke="#9c6a14" stroke-width=".6"/>
<rect x="43.3" y="185.8" width="4.4" height="1.3" fill="#a9a9a0" transform="rotate(0 45.5 186.5)"/>
<rect x="59.8" y="137.5" width="4.4" height="6.2" rx="1.6" fill="#9e2a3c"/>
<rect x="59.8" y="152.0" width="4.4" height="6.2" rx="1.6" fill="#9e2a3c"/>
<rect x="77.8" y="137.5" width="4.4" height="6.2" rx="1.6" fill="#9e2a3c"/>
<rect x="77.8" y="152.0" width="4.4" height="6.2" rx="1.6" fill="#9e2a3c"/>
<rect x="77.8" y="166.5" width="4.4" height="6.2" rx="1.6" fill="#9e2a3c"/>
<rect x="77.8" y="180.4" width="4.4" height="6.2" rx="1.6" fill="#9e2a3c"/>
<rect x="77.8" y="194.3" width="4.4" height="6.2" rx="1.6" fill="#9e2a3c"/>
<rect x="63.8" y="133.0" width="7.2" height="29.6" fill="#d4941f" stroke="#9c6a14" stroke-width=".6"/>
<rect x="71.0" y="133.0" width="7.0" height="68.5" fill="#d4941f" stroke="#9c6a14" stroke-width=".6"/>
<rect x="66.8" y="138.6" width="1.4" height="4.0" fill="#a9a9a0" transform="rotate(0 67.5 140.6)"/>
<rect x="66.8" y="153.1" width="1.4" height="4.0" fill="#a9a9a0" transform="rotate(0 67.5 155.1)"/>
<rect x="73.8" y="138.6" width="1.4" height="4.0" fill="#a9a9a0" transform="rotate(0 74.5 140.6)"/>
<rect x="73.8" y="153.1" width="1.4" height="4.0" fill="#a9a9a0" transform="rotate(0 74.5 155.1)"/>
<rect x="73.8" y="167.6" width="1.4" height="4.0" fill="#a9a9a0" transform="rotate(0 74.5 169.6)"/>
<rect x="73.8" y="181.5" width="1.4" height="4.0" fill="#a9a9a0" transform="rotate(0 74.5 183.5)"/>
<rect x="73.8" y="195.4" width="1.4" height="4.0" fill="#a9a9a0" transform="rotate(0 74.5 197.4)"/>
<line x1="71" y1="147.5" x2="78" y2="147.5" stroke="#9c6a14" stroke-width=".7"/>
<line x1="71" y1="162.6" x2="78" y2="162.6" stroke="#9c6a14" stroke-width=".7"/>
<line x1="71" y1="176.5" x2="78" y2="176.5" stroke="#9c6a14" stroke-width=".7"/>
<line x1="71" y1="190.5" x2="78" y2="190.5" stroke="#9c6a14" stroke-width=".7"/>
<line x1="63.800" y1="147.500" x2="71" y2="147.500" stroke="#9c6a14" stroke-width=".7"/>
<rect x="101.4" y="137.5" width="4.4" height="6.2" rx="1.6" fill="#9e2a3c"/>
<rect x="101.4" y="152.0" width="4.4" height="6.2" rx="1.6" fill="#9e2a3c"/>
<rect x="101.4" y="166.5" width="4.4" height="6.2" rx="1.6" fill="#9e2a3c"/>
<rect x="101.4" y="180.4" width="4.4" height="6.2" rx="1.6" fill="#9e2a3c"/>
<rect x="101.4" y="194.3" width="4.4" height="6.2" rx="1.6" fill="#9e2a3c"/>
<rect x="119.6" y="180.4" width="4.4" height="6.2" rx="1.6" fill="#9e2a3c"/>
<rect x="119.6" y="194.3" width="4.4" height="6.2" rx="1.6" fill="#9e2a3c"/>
<rect x="105.8" y="133.0" width="7.0" height="68.5" fill="#d4941f" stroke="#9c6a14" stroke-width=".6"/>
<rect x="112.8" y="176.5" width="7.0" height="25.0" fill="#d4941f" stroke="#9c6a14" stroke-width=".6"/>
<rect x="108.6" y="138.6" width="1.4" height="4.0" fill="#a9a9a0" transform="rotate(0 109.3 140.6)"/>
<rect x="108.6" y="153.1" width="1.4" height="4.0" fill="#a9a9a0" transform="rotate(0 109.3 155.1)"/>
<rect x="108.6" y="167.6" width="1.4" height="4.0" fill="#a9a9a0" transform="rotate(0 109.3 169.6)"/>
<rect x="108.6" y="181.5" width="1.4" height="4.0" fill="#a9a9a0" transform="rotate(0 109.3 183.5)"/>
<rect x="108.6" y="195.4" width="1.4" height="4.0" fill="#a9a9a0" transform="rotate(0 109.3 197.4)"/>
<rect x="115.6" y="181.5" width="1.4" height="4.0" fill="#a9a9a0" transform="rotate(0 116.3 183.5)"/>
<rect x="115.6" y="195.4" width="1.4" height="4.0" fill="#a9a9a0" transform="rotate(0 116.3 197.4)"/>
<line x1="105.800" y1="147.5" x2="112.800" y2="147.5" stroke="#9c6a14" stroke-width=".7"/>
<line x1="105.800" y1="162.6" x2="112.800" y2="162.6" stroke="#9c6a14" stroke-width=".7"/>
<line x1="105.800" y1="176.5" x2="112.800" y2="176.5" stroke="#9c6a14" stroke-width=".7"/>
<line x1="105.800" y1="190.5" x2="112.800" y2="190.5" stroke="#9c6a14" stroke-width=".7"/>
<rect x="112.8" y="145.2" width="6.0" height="17.4" fill="#94704c"/>
<rect x="113.4" y="166.3" width="9.3" height="9.1" fill="#bdbdbd" stroke="#a8a8a8" stroke-width=".5"/>
<rect x="118.6" y="133.0" width="17.4" height="4.7" fill="#94704c"/>
<rect x="139.0" y="137.5" width="4.4" height="6.2" rx="1.6" fill="#9e2a3c"/>
<rect x="139.0" y="152.0" width="4.4" height="6.2" rx="1.6" fill="#9e2a3c"/>
<rect x="139.0" y="166.5" width="4.4" height="6.2" rx="1.6" fill="#9e2a3c"/>
<rect x="139.0" y="180.4" width="4.4" height="6.2" rx="1.6" fill="#9e2a3c"/>
<rect x="139.0" y="194.3" width="4.4" height="6.2" rx="1.6" fill="#9e2a3c"/>
<rect x="143.3" y="133.0" width="6.7" height="68.5" fill="#d4941f" stroke="#9c6a14" stroke-width=".6"/>
<rect x="145.9" y="138.6" width="1.4" height="4.0" fill="#a9a9a0" transform="rotate(0 146.6 140.6)"/>
<rect x="145.9" y="153.1" width="1.4" height="4.0" fill="#a9a9a0" transform="rotate(0 146.6 155.1)"/>
<rect x="145.9" y="167.6" width="1.4" height="4.0" fill="#a9a9a0" transform="rotate(0 146.6 169.6)"/>
<rect x="145.9" y="181.5" width="1.4" height="4.0" fill="#a9a9a0" transform="rotate(0 146.6 183.5)"/>
<rect x="145.9" y="195.4" width="1.4" height="4.0" fill="#a9a9a0" transform="rotate(0 146.6 197.4)"/>
<line x1="143.300" y1="147.5" x2="150" y2="147.5" stroke="#9c6a14" stroke-width=".7"/>
<line x1="143.300" y1="162.6" x2="150" y2="162.6" stroke="#9c6a14" stroke-width=".7"/>
<line x1="143.300" y1="176.5" x2="150" y2="176.5" stroke="#9c6a14" stroke-width=".7"/>
<line x1="143.300" y1="190.5" x2="150" y2="190.5" stroke="#9c6a14" stroke-width=".7"/>
<rect x="158.0" y="158.9" width="4.4" height="6.2" rx="1.6" fill="#9e2a3c"/>
<rect x="158.0" y="172.9" width="4.4" height="6.2" rx="1.6" fill="#9e2a3c"/>
<rect x="158.0" y="186.8" width="4.4" height="6.2" rx="1.6" fill="#9e2a3c"/>
<rect x="162.2" y="155.1" width="7.0" height="46.4" fill="#d4941f" stroke="#9c6a14" stroke-width=".6"/>
<rect x="165.0" y="160.0" width="1.4" height="4.0" fill="#a9a9a0" transform="rotate(0 165.7 162.0)"/>
<rect x="165.0" y="174.0" width="1.4" height="4.0" fill="#a9a9a0" transform="rotate(0 165.7 176.0)"/>
<rect x="165.0" y="187.9" width="1.4" height="4.0" fill="#a9a9a0" transform="rotate(0 165.7 189.9)"/>
<line x1="162.200" y1="169.0" x2="169.200" y2="169.0" stroke="#9c6a14" stroke-width=".7"/>
<line x1="162.200" y1="183.0" x2="169.200" y2="183.0" stroke="#9c6a14" stroke-width=".7"/>
<line x1="162.200" y1="197.0" x2="169.200" y2="197.0" stroke="#9c6a14" stroke-width=".7"/>
<rect x="162.2" y="113.0" width="90.5" height="1.7" fill="#6b6b6b"/>
<rect x="176.1" y="110.4" width="1.4" height="2.6" fill="#6b6b6b"/>
<rect x="251.3" y="110.4" width="1.4" height="2.6" fill="#6b6b6b"/>
<rect x="162.2" y="113.0" width="1.6" height="37.7" fill="#6b6b6b"/>
<rect x="162.2" y="149.0" width="32.5" height="1.7" fill="#6b6b6b"/>
<rect x="193.3" y="147.5" width="1.4" height="3.2" fill="#6b6b6b"/>
<rect x="167.7" y="123.3" width="4.6" height="6.4" rx="1.6" fill="#9e2a3c"/>
<rect x="167.7" y="131.6" width="4.6" height="6.4" rx="1.6" fill="#9e2a3c"/>
<rect x="183.7" y="123.3" width="4.6" height="6.4" rx="1.6" fill="#9e2a3c"/>
<rect x="183.7" y="131.6" width="4.6" height="6.4" rx="1.6" fill="#9e2a3c"/>
<rect x="174.8" y="138.1" width="6.4" height="4.4" rx="1.6" fill="#9e2a3c"/>
<rect x="172.1" y="120.9" width="11.8" height="18.5" fill="#d4941f" stroke="#9c6a14" stroke-width=".6"/>
<rect x="193.2" y="114.7" width="1.5" height="21.0" fill="#3fa3de"/>
<polyline points="169.0,100.0 172.0,104.0 176.5,110.4" fill="none" stroke="#8a6f55" stroke-width=".6"/>
<polyline points="246.0,100.0 250.0,103.0 247.0,105.0 251.5,110.4" fill="none" stroke="#8a6f55" stroke-width=".6"/>
<rect x="213.5" y="114.7" width="1.6" height="2.7" fill="#6b6b6b"/>
<rect x="213.5" y="128.4" width="1.6" height="38.9" fill="#6b6b6b"/>
<polyline points="213.5,117.4 207.0,121.0 213.5,128.4" fill="none" stroke="#8a6f55" stroke-width=".6"/>
<rect x="213.5" y="131.9" width="14.2" height="1.7" fill="#6b6b6b"/>
<rect x="239.3" y="131.9" width="14.5" height="1.7" fill="#6b6b6b"/>
<polyline points="227.7,132.5 235.0,124.5 238.0,126.0 239.3,132.5" fill="none" stroke="#8a6f55" stroke-width=".6"/>
<rect x="246.3" y="132.5" width="1.6" height="36.5" fill="#6b6b6b"/>
<rect x="209.8" y="165.9" width="38.1" height="1.7" fill="#6b6b6b"/>
<rect x="209.2" y="132.5" width="4.3" height="33.0" fill="#94704c"/>
<rect x="248.6" y="133.6" width="4.6" height="26.7" fill="#94704c"/>
<rect x="209.8" y="166.7" width="1.6" height="34.2" fill="#6b6b6b"/>
<rect x="209.8" y="199.4" width="37.7" height="1.5" fill="#6b6b6b"/>
<rect x="246.3" y="179.4" width="1.6" height="21.5" fill="#6b6b6b"/>
<polyline points="246.3,169.0 240.0,172.0 246.3,179.4" fill="none" stroke="#8a6f55" stroke-width=".6"/>
<polyline points="253.8,133.0 256.0,138.0 258.0,139.0" fill="none" stroke="#8a6f55" stroke-width=".6"/>
<rect x="218.7" y="188.4" width="4.4" height="6.4" rx="1.6" fill="#9e2a3c"/>
<rect x="230.9" y="188.4" width="4.4" height="6.4" rx="1.6" fill="#9e2a3c"/>
<rect x="223.1" y="185.2" width="7.9" height="12.8" fill="#d4941f" stroke="#9c6a14" stroke-width=".6"/>
<rect x="248.6" y="184.7" width="4.6" height="16.2" fill="#94704c"/>
<rect x="199.0" y="54.9" width="27.4" height="4.7" fill="#94704c"/>
<rect x="198.5" y="59.6" width="27.9" height="1.2" fill="#6b6b6b"/>
<rect x="211.8" y="77.3" width="6.4" height="4.6" rx="1.6" fill="#9e2a3c"/>
<rect x="226.3" y="77.3" width="6.4" height="4.6" rx="1.6" fill="#9e2a3c"/>
<rect x="207.6" y="81.6" width="14.5" height="6.8" fill="#d4941f" stroke="#9c6a14" stroke-width=".6"/>
<rect x="222.1" y="81.6" width="14.5" height="6.8" fill="#d4941f" stroke="#9c6a14" stroke-width=".6"/>
<rect x="212.8" y="84.6" width="4.4" height="1.3" fill="#a9a9a0" transform="rotate(0 215.0 85.3)"/>
<rect x="227.3" y="84.6" width="4.4" height="1.3" fill="#a9a9a0" transform="rotate(0 229.5 85.3)"/>
<rect x="226.4" y="0.5" width="1.6" height="66.3" fill="#6b6b6b"/>
<rect x="226.4" y="65.1" width="33.6" height="1.7" fill="#6b6b6b"/>
<rect x="279.0" y="65.1" width="14.3" height="1.7" fill="#6b6b6b"/>
<polyline points="260.0,66.0 266.0,59.5 269.0,64.0 272.0,59.5 279.0,66.0" fill="none" stroke="#8a6f55" stroke-width=".6"/>
<rect x="232.2" y="7.9" width="7.6" height="4.6" rx="1.6" fill="#9e2a3c"/>
<rect x="229.0" y="12.2" width="14.1" height="6.8" fill="#d4941f" stroke="#9c6a14" stroke-width=".6"/>
<rect x="233.8" y="15.1" width="4.4" height="1.3" fill="#a9a9a0" transform="rotate(0 236.0 15.8)"/>
<rect x="232.2" y="31.0" width="7.6" height="4.6" rx="1.6" fill="#9e2a3c"/>
<rect x="229.0" y="35.3" width="14.1" height="6.8" fill="#d4941f" stroke="#9c6a14" stroke-width=".6"/>
<rect x="233.8" y="38.2" width="4.4" height="1.3" fill="#a9a9a0" transform="rotate(0 236.0 38.9)"/>
<rect x="232.2" y="53.4" width="7.6" height="4.6" rx="1.6" fill="#9e2a3c"/>
<rect x="229.0" y="57.7" width="14.1" height="6.8" fill="#d4941f" stroke="#9c6a14" stroke-width=".6"/>
<rect x="233.8" y="60.7" width="4.4" height="1.3" fill="#a9a9a0" transform="rotate(0 236.0 61.3)"/>
<rect x="245.7" y="66.8" width="5.2" height="9.2" fill="#94704c"/>
<rect x="251.4" y="66.8" width="1.6" height="26.8" fill="#6b6b6b"/>
<polyline points="252.5,93.6 249.0,97.0 253.0,100.0 249.0,103.0 254.0,106.0 250.0,109.0 252.5,113.0" fill="none" stroke="#8a6f55" stroke-width=".6"/>
<rect x="291.8" y="0.5" width="1.6" height="91.9" fill="#6b6b6b"/>
<rect x="291.6" y="113.9" width="1.6" height="87.6" fill="#6b6b6b"/>
<polyline points="292.0,92.4 299.0,100.0 296.0,103.0 299.0,106.0 292.0,113.9" fill="none" stroke="#8a6f55" stroke-width=".6"/>
<rect x="275.4" y="121.1" width="11.4" height="8.5" fill="#bdbdbd" stroke="#a8a8a8" stroke-width=".5"/>
<rect x="264.4" y="131.6" width="27.8" height="1.7" fill="#6b6b6b"/>
<rect x="265.9" y="133.2" width="1.4" height="20.2" fill="#3fa3de"/>
<polyline points="264.4,132.0 258.0,138.0" fill="none" stroke="#8a6f55" stroke-width=".6"/>
<rect x="265.9" y="167.5" width="26.3" height="1.7" fill="#6b6b6b"/>
<rect x="265.9" y="165.8" width="1.4" height="3.3" fill="#6b6b6b"/>
<rect x="279.8" y="176.3" width="6.4" height="4.6" rx="1.6" fill="#9e2a3c"/>
<rect x="276.3" y="170.2" width="14.2" height="6.4" fill="#d4941f" stroke="#9c6a14" stroke-width=".6"/>
<rect x="280.8" y="173.2" width="4.4" height="1.3" fill="#a9a9a0" transform="rotate(0 283.0 173.8)"/>
<rect x="279.8" y="194.7" width="6.4" height="4.6" rx="1.6" fill="#9e2a3c"/>
<rect x="275.6" y="188.4" width="14.6" height="6.9" fill="#d4941f" stroke="#9c6a14" stroke-width=".6"/>
<rect x="280.8" y="191.5" width="4.4" height="1.3" fill="#a9a9a0" transform="rotate(0 283.0 192.2)"/>
<rect x="304.8" y="0.5" width="1.6" height="12.8" fill="#6b6b6b"/>
<rect x="304.8" y="12.2" width="81.1" height="1.7" fill="#6b6b6b"/>
<rect x="337.9" y="0.5" width="1.6" height="12.5" fill="#6b6b6b"/>
<rect x="384.5" y="0.5" width="1.6" height="13.0" fill="#6b6b6b"/>
<rect x="353.0" y="0.5" width="33.0" height="2.6" fill="#f0f0f0" stroke="#6b6b6b" stroke-width=".8"/>
<rect x="356.0" y="1.0" width="28.0" height="1.3" fill="#3fa3de"/>
<rect x="319.3" y="13.3" width="1.6" height="23.5" fill="#6b6b6b"/>
<rect x="305.6" y="24.2" width="15.2" height="1.7" fill="#6b6b6b"/>
<rect x="305.6" y="35.5" width="15.2" height="1.7" fill="#6b6b6b"/>
<rect x="336.5" y="16.2" width="31.2" height="14.8" fill="#f1f1f1" stroke="#bcbcbc" stroke-width=".5"/>
<line x1="338.9" y1="16.2" x2="338.9" y2="31.0" stroke="#a2a2a2" stroke-width=".6"/>
<line x1="341.3" y1="16.2" x2="341.3" y2="31.0" stroke="#a2a2a2" stroke-width=".6"/>
<line x1="343.7" y1="16.2" x2="343.7" y2="31.0" stroke="#a2a2a2" stroke-width=".6"/>
<line x1="346.1" y1="16.2" x2="346.1" y2="31.0" stroke="#a2a2a2" stroke-width=".6"/>
<line x1="348.5" y1="16.2" x2="348.5" y2="31.0" stroke="#a2a2a2" stroke-width=".6"/>
<line x1="350.9" y1="16.2" x2="350.9" y2="31.0" stroke="#a2a2a2" stroke-width=".6"/>
<line x1="353.3" y1="16.2" x2="353.3" y2="31.0" stroke="#a2a2a2" stroke-width=".6"/>
<line x1="355.7" y1="16.2" x2="355.7" y2="31.0" stroke="#a2a2a2" stroke-width=".6"/>
<line x1="358.1" y1="16.2" x2="358.1" y2="31.0" stroke="#a2a2a2" stroke-width=".6"/>
<line x1="360.5" y1="16.2" x2="360.5" y2="31.0" stroke="#a2a2a2" stroke-width=".6"/>
<line x1="362.9" y1="16.2" x2="362.9" y2="31.0" stroke="#a2a2a2" stroke-width=".6"/>
<line x1="365.3" y1="16.2" x2="365.3" y2="31.0" stroke="#a2a2a2" stroke-width=".6"/>
<rect x="336.5" y="33.2" width="31.2" height="16.0" fill="#f1f1f1" stroke="#bcbcbc" stroke-width=".5"/>
<line x1="338.9" y1="33.2" x2="338.9" y2="49.2" stroke="#a2a2a2" stroke-width=".6"/>
<line x1="341.3" y1="33.2" x2="341.3" y2="49.2" stroke="#a2a2a2" stroke-width=".6"/>
<line x1="343.7" y1="33.2" x2="343.7" y2="49.2" stroke="#a2a2a2" stroke-width=".6"/>
<line x1="346.1" y1="33.2" x2="346.1" y2="49.2" stroke="#a2a2a2" stroke-width=".6"/>
<line x1="348.5" y1="33.2" x2="348.5" y2="49.2" stroke="#a2a2a2" stroke-width=".6"/>
<line x1="350.9" y1="33.2" x2="350.9" y2="49.2" stroke="#a2a2a2" stroke-width=".6"/>
<line x1="353.3" y1="33.2" x2="353.3" y2="49.2" stroke="#a2a2a2" stroke-width=".6"/>
<line x1="355.7" y1="33.2" x2="355.7" y2="49.2" stroke="#a2a2a2" stroke-width=".6"/>
<line x1="358.1" y1="33.2" x2="358.1" y2="49.2" stroke="#a2a2a2" stroke-width=".6"/>
<line x1="360.5" y1="33.2" x2="360.5" y2="49.2" stroke="#a2a2a2" stroke-width=".6"/>
<line x1="362.9" y1="33.2" x2="362.9" y2="49.2" stroke="#a2a2a2" stroke-width=".6"/>
<line x1="365.3" y1="33.2" x2="365.3" y2="49.2" stroke="#a2a2a2" stroke-width=".6"/>
<rect x="379.2" y="12.2" width="1.6" height="176.4" fill="#6b6b6b"/>
<rect x="379.2" y="24.2" width="1.6" height="26.7" fill="#3fa3de"/>
<rect x="379.2" y="152.8" width="1.6" height="24.3" fill="#3fa3de"/>
<rect x="305.2" y="50.5" width="75.6" height="1.7" fill="#6b6b6b"/>
<rect x="322.3" y="52.1" width="1.6" height="31.2" fill="#6b6b6b"/>
<rect x="350.6" y="52.1" width="1.6" height="31.2" fill="#6b6b6b"/>
<rect x="330.2" y="55.4" width="13.6" height="2.6" fill="#b9b9b9" stroke="#a0a0a0" stroke-width=".5"/>
<rect x="325.1" y="58.0" width="23.9" height="22.1" fill="#b3b3b3" stroke="#9d9d9d" stroke-width=".6"/>
<rect x="358.6" y="55.4" width="13.7" height="2.6" fill="#b9b9b9" stroke="#a0a0a0" stroke-width=".5"/>
<rect x="353.3" y="58.0" width="24.3" height="22.1" fill="#b3b3b3" stroke="#9d9d9d" stroke-width=".6"/>
<rect x="304.8" y="82.4" width="26.0" height="1.7" fill="#6b6b6b"/>
<rect x="343.3" y="82.4" width="15.7" height="1.7" fill="#6b6b6b"/>
<rect x="371.1" y="82.4" width="8.6" height="1.7" fill="#6b6b6b"/>
<polyline points="305.0,52.0 302.0,56.0 306.0,59.0 302.0,62.0 306.0,66.0 302.0,70.0 306.0,74.0 302.0,78.0 306.0,82.4" fill="none" stroke="#8a6f55" stroke-width=".6"/>
<rect x="305.0" y="119.1" width="26.3" height="1.7" fill="#6b6b6b"/>
<rect x="343.3" y="119.1" width="16.2" height="1.7" fill="#6b6b6b"/>
<rect x="371.1" y="119.1" width="8.7" height="1.7" fill="#6b6b6b"/>
<rect x="322.4" y="120.0" width="1.6" height="31.6" fill="#6b6b6b"/>
<rect x="350.4" y="120.0" width="1.6" height="31.6" fill="#6b6b6b"/>
<rect x="330.5" y="144.7" width="13.3" height="2.9" fill="#b9b9b9" stroke="#a0a0a0" stroke-width=".5"/>
<rect x="324.7" y="123.0" width="24.9" height="21.7" fill="#b3b3b3" stroke="#9d9d9d" stroke-width=".6"/>
<rect x="358.7" y="144.7" width="14.1" height="2.9" fill="#b9b9b9" stroke="#a0a0a0" stroke-width=".5"/>
<rect x="353.1" y="123.0" width="25.0" height="21.7" fill="#b3b3b3" stroke="#9d9d9d" stroke-width=".6"/>
<rect x="305.0" y="150.5" width="75.7" height="1.7" fill="#6b6b6b"/>
<polyline points="305.5,120.9 302.0,125.0 306.0,129.0 302.0,133.0 306.0,137.0 302.0,141.0 306.0,145.0 305.5,150.5 312.0,160.0 309.0,163.0 305.5,164.0" fill="none" stroke="#8a6f55" stroke-width=".6"/>
<rect x="335.1" y="154.3" width="31.9" height="9.3" fill="#f1f1f1" stroke="#bcbcbc" stroke-width=".5"/>
<line x1="337.6" y1="154.3" x2="337.6" y2="163.6" stroke="#a2a2a2" stroke-width=".6"/>
<line x1="340.0" y1="154.3" x2="340.0" y2="163.6" stroke="#a2a2a2" stroke-width=".6"/>
<line x1="342.5" y1="154.3" x2="342.5" y2="163.6" stroke="#a2a2a2" stroke-width=".6"/>
<line x1="344.9" y1="154.3" x2="344.9" y2="163.6" stroke="#a2a2a2" stroke-width=".6"/>
<line x1="347.4" y1="154.3" x2="347.4" y2="163.6" stroke="#a2a2a2" stroke-width=".6"/>
<line x1="349.8" y1="154.3" x2="349.8" y2="163.6" stroke="#a2a2a2" stroke-width=".6"/>
<line x1="352.3" y1="154.3" x2="352.3" y2="163.6" stroke="#a2a2a2" stroke-width=".6"/>
<line x1="354.7" y1="154.3" x2="354.7" y2="163.6" stroke="#a2a2a2" stroke-width=".6"/>
<line x1="357.2" y1="154.3" x2="357.2" y2="163.6" stroke="#a2a2a2" stroke-width=".6"/>
<line x1="359.6" y1="154.3" x2="359.6" y2="163.6" stroke="#a2a2a2" stroke-width=".6"/>
<line x1="362.1" y1="154.3" x2="362.1" y2="163.6" stroke="#a2a2a2" stroke-width=".6"/>
<line x1="364.5" y1="154.3" x2="364.5" y2="163.6" stroke="#a2a2a2" stroke-width=".6"/>
<rect x="335.1" y="166.7" width="31.9" height="9.3" fill="#f1f1f1" stroke="#bcbcbc" stroke-width=".5"/>
<line x1="337.6" y1="166.7" x2="337.6" y2="176.0" stroke="#a2a2a2" stroke-width=".6"/>
<line x1="340.0" y1="166.7" x2="340.0" y2="176.0" stroke="#a2a2a2" stroke-width=".6"/>
<line x1="342.5" y1="166.7" x2="342.5" y2="176.0" stroke="#a2a2a2" stroke-width=".6"/>
<line x1="344.9" y1="166.7" x2="344.9" y2="176.0" stroke="#a2a2a2" stroke-width=".6"/>
<line x1="347.4" y1="166.7" x2="347.4" y2="176.0" stroke="#a2a2a2" stroke-width=".6"/>
<line x1="349.8" y1="166.7" x2="349.8" y2="176.0" stroke="#a2a2a2" stroke-width=".6"/>
<line x1="352.3" y1="166.7" x2="352.3" y2="176.0" stroke="#a2a2a2" stroke-width=".6"/>
<line x1="354.7" y1="166.7" x2="354.7" y2="176.0" stroke="#a2a2a2" stroke-width=".6"/>
<line x1="357.2" y1="166.7" x2="357.2" y2="176.0" stroke="#a2a2a2" stroke-width=".6"/>
<line x1="359.6" y1="166.7" x2="359.6" y2="176.0" stroke="#a2a2a2" stroke-width=".6"/>
<line x1="362.1" y1="166.7" x2="362.1" y2="176.0" stroke="#a2a2a2" stroke-width=".6"/>
<line x1="364.5" y1="166.7" x2="364.5" y2="176.0" stroke="#a2a2a2" stroke-width=".6"/>
<rect x="305.0" y="164.4" width="14.5" height="1.5" fill="#6b6b6b"/>
<rect x="318.0" y="164.4" width="1.5" height="14.5" fill="#6b6b6b"/>
<rect x="305.0" y="164.4" width="1.6" height="37.1" fill="#6b6b6b"/>
<rect x="305.0" y="177.2" width="75.7" height="1.7" fill="#6b6b6b"/>
<rect x="338.6" y="178.9" width="1.6" height="22.6" fill="#6b6b6b"/>
<rect x="339.2" y="187.0" width="46.4" height="1.7" fill="#6b6b6b"/>
<rect x="384.3" y="187.0" width="1.5" height="14.5" fill="#6b6b6b"/>
<ellipse cx="345.8" cy="193.800" rx="2.2" ry="3.2" fill="#a9d3ee" stroke="#7fb4d8" stroke-width=".4"/>
<rect x="343.4" y="188.8" width="4.8" height="2.0" fill="#a9d3ee"/>
<ellipse cx="356.4" cy="193.800" rx="2.2" ry="3.2" fill="#a9d3ee" stroke="#7fb4d8" stroke-width=".4"/>
<rect x="354.0" y="188.8" width="4.8" height="2.0" fill="#a9d3ee"/>
<ellipse cx="367.6" cy="193.800" rx="2.2" ry="3.2" fill="#a9d3ee" stroke="#7fb4d8" stroke-width=".4"/>
<rect x="365.2" y="188.8" width="4.8" height="2.0" fill="#a9d3ee"/>
<line x1="351.4" y1="188.600" x2="351.4" y2="201.500" stroke="#9a7f66" stroke-width=".6"/>
<line x1="362.4" y1="188.600" x2="362.4" y2="201.500" stroke="#9a7f66" stroke-width=".6"/>
<line x1="372.8" y1="188.600" x2="372.8" y2="201.500" stroke="#9a7f66" stroke-width=".6"/>
<rect x=".5" y=".5" width="387" height="201" fill="none" stroke="#bdbdbd" stroke-width="1"/>
</svg>
  <div style="position:absolute;left:296px;top:315px;width:40px;height:40px;border-radius:50%;background:rgba(28,28,28,.64)"><svg style="position:absolute;left:8px;top:8px" width="24" height="24" viewBox="0 0 24 24"><path fill="#fff" d="M14,13V17H10V13H7L12,8L17,13M19.350,10.030C18.670,6.590 15.640,4 12,4C9.110,4 6.600,5.640 5.350,8.030C2.340,8.360 0,10.900 0,14A6,6 0 0,0 6,20H19A5,5 0 0,0 24,15C24,12.360 21.950,10.220 19.350,10.030Z"/></svg></div>
  <div style="position:absolute;left:348px;top:315px;width:40px;height:40px;border-radius:50%;background:rgba(121,121,121,.73)"><svg style="position:absolute;left:8px;top:8px" width="24" height="24" viewBox="0 0 24 24"><path fill="#fff" d="M19,4H15.500L14.500,3H9.500L8.500,4H5V6H19M6,19A2,2 0 0,0 8,21H16A2,2 0 0,0 18,19V7H6V19Z"/></svg></div>
  <!--/PLAN-->
  <div class="t sec" id="d_pos" style="top:518px;letter-spacing:0.24px;">Position</div>
  <div class="t lab" id="d_clat" style="top:555px;">Center latitude</div>
  <div class="t val" id="d_lat" style="top:573px;">43.59274677840824</div>
  <div class="ul" style="top:597px"></div>
  <div class="t lab" id="d_clon" style="top:625px;letter-spacing:-0.06px;">Center longitude</div>
  <div class="t val" id="d_lon" style="top:643px;">1.442348057452144</div>
  <div class="ul" style="top:667px"></div>
  <div class="t lab" id="d_rot" style="top:695px;letter-spacing:0px;">Rotation(deg)</div>
  <div class="t val" id="d_zero" style="top:713px;">0</div>
  <div class="ul" style="top:737px"></div>
  <div class="hr" style="top:741px"></div>
  <div class="t" id="d_cancel" style="left:264px;top:769px;font-size:14px;color:#212121;-webkit-text-stroke:.4px #212121;letter-spacing:0.4px;">CANCEL</div>
  <div class="t" id="d_add" style="left:357px;top:769px;font-size:14px;color:#2a7de1;-webkit-text-stroke:.4px #2a7de1;letter-spacing:0.15px;">ADD</div>
</div>
<!--/DLG-->
</body>
</html>
